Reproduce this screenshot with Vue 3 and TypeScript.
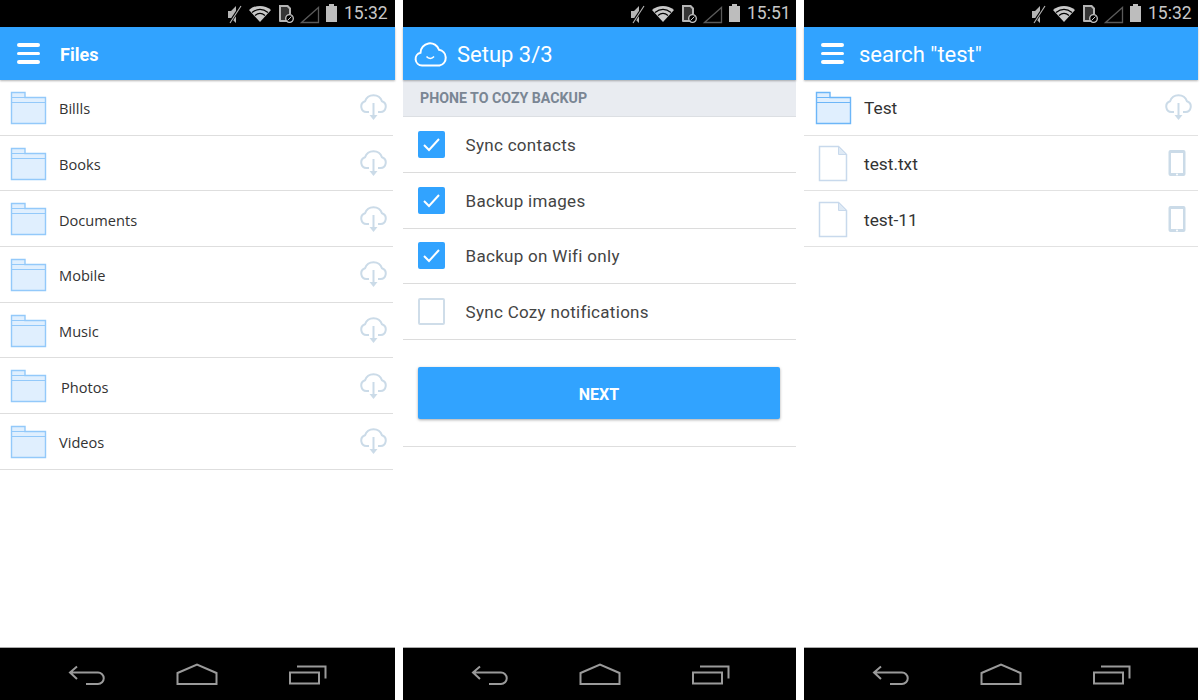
<script setup lang="ts">
interface Row {
  name: string
  kind: 'folder' | 'file'
  shift?: boolean
}

const folders: Row[] = [
  { name: 'Billls', kind: 'folder' },
  { name: 'Books', kind: 'folder' },
  { name: 'Documents', kind: 'folder' },
  { name: 'Mobile', kind: 'folder' },
  { name: 'Music', kind: 'folder' },
  { name: 'Photos', kind: 'folder', shift: true },
  { name: 'Videos', kind: 'folder' },
]

const results: Row[] = [
  { name: 'Test', kind: 'folder' },
  { name: 'test.txt', kind: 'file' },
  { name: 'test-11', kind: 'file' },
]

const options = [
  { label: 'Sync contacts', checked: true },
  { label: 'Backup images', checked: true },
  { label: 'Backup on Wifi only', checked: true },
  { label: 'Sync Cozy notifications', checked: false },
]

const phones = [
  { id: 'files', time: '15:32' },
  { id: 'setup', time: '15:51' },
  { id: 'search', time: '15:32' },
]
</script>

<template>
  <div class="screens">
    <section v-for="phone in phones" :key="phone.id" class="phone" :class="`phone--${phone.id}`">
      <div class="status">
        <svg class="status__icons" width="112" height="27" viewBox="0 0 112 27">
          <!-- muted speaker -->
          <path d="M2 11h3l5-5v17l-5-5H2z" fill="#b5b5b5" />
          <path d="M15 6 3 24" stroke="#000" stroke-width="3" />
          <path d="M15 6 4 23" stroke="#b5b5b5" stroke-width="1.100" />
          <!-- wifi -->
          <path d="M23 10C29 4.500 39 4.500 45 10L34 22z" fill="#c8c8c8" />
          <path d="M26 12.500C31 8.500 37 8.500 42 12.500M29 15.500C32 13 36 13 39 15.500" stroke="#000" stroke-width="1.200" fill="none" />
          <!-- sim -->
          <path d="M53 5h9l3 3v6h-2v8h-9a1 1 0 0 1-1-1z" fill="#b5b5b5" />
          <path d="M55 7h6l2 2v11h-8z" fill="#000" opacity=".7" />
          <circle cx="63.500" cy="18.500" r="3.800" fill="#000" stroke="#c8c8c8" stroke-width="1.300" />
          <path d="M61.500 20.500 65.500 16.500" stroke="#c8c8c8" stroke-width="1" />
          <!-- signal -->
          <path d="M75.500 22.500 92.500 7.500v15z" fill="none" stroke="#5a5a5a" stroke-width="1.300" />
          <!-- battery -->
          <path d="M100 6h3V4h5v2h3v16h-11z" fill="#bdbdbd" />
        </svg>
        <span class="status__time">{{ phone.time }}</span>
      </div>

      <!-- files list -->
      <template v-if="phone.id === 'files'">
        <header class="bar">
          <span class="burger"><i></i><i></i><i></i></span>
          <h1 class="bar__title bar__title--bold">Files</h1>
        </header>
        <ul class="list list--files">
          <li v-for="row in folders" :key="row.name" class="row">
            <svg class="row__icon" width="37" height="34" viewBox="0 0 37 34">
              <path d="M1.500 1.500h13.500v5h20.500v26h-34z" fill="#e0effe" stroke="#93c9fa" stroke-width="1.400" />
              <path d="M1.500 6.500H15M1.500 11.500h34" stroke="#93c9fa" stroke-width="1.200" fill="none" />
            </svg>
            <span class="row__name" :class="{ 'row__name--shift': row.shift }">{{ row.name }}</span>
            <svg class="row__side row__side--cloud" width="28" height="28" viewBox="0 0 28 28">
              <path d="M9 18H6.500A5.500 5.500 0 0 1 5 7.300 9 9 0 0 1 22 7.300 5.500 5.500 0 0 1 20.500 18H18" fill="none" stroke="#cbdbe8" stroke-width="2" />
              <path d="M13.500 9v14" stroke="#cbdbe8" stroke-width="2" />
              <path d="M9.500 21h8l-4 5z" fill="#cbdbe8" />
            </svg>
          </li>
        </ul>
      </template>

      <!-- setup step -->
      <template v-else-if="phone.id === 'setup'">
        <header class="bar bar--setup">
          <svg width="34" height="26" viewBox="0 0 34 26">
            <path d="M8 24.500a6.500 6.500 0 0 1-1.500-12.800A9.500 9.500 0 0 1 25 8.800a8 8 0 0 1 .5 15.700z" fill="none" stroke="#fff" stroke-width="2" />
            <path d="M12.500 15.500c2 2.500 5.500 2.500 7.500 0" fill="none" stroke="#fff" stroke-width="1.500" />
          </svg>
          <h1 class="bar__title bar__title--setup">Setup 3/3</h1>
        </header>
        <div class="section">PHONE TO COZY BACKUP</div>
        <ul class="list">
          <li v-for="opt in options" :key="opt.label" class="option">
            <span class="check" :class="{ 'check--on': opt.checked }">
              <svg v-if="opt.checked" width="27" height="27" viewBox="0 0 27 27">
                <path d="M6 14 11 19 21 8" fill="none" stroke="#fff" stroke-width="2" />
              </svg>
            </span>
            <span class="option__label">{{ opt.label }}</span>
          </li>
        </ul>
        <div class="actions">
          <button class="next" type="button">NEXT</button>
        </div>
      </template>

      <!-- search results -->
      <template v-else>
        <header class="bar">
          <span class="burger"><i></i><i></i><i></i></span>
          <h1 class="bar__title bar__title--search">search "test"</h1>
        </header>
        <ul class="list">
          <li v-for="row in results" :key="row.name" class="row row--result">
            <svg v-if="row.kind === 'folder'" class="row__icon" width="37" height="34" viewBox="0 0 37 34">
              <path d="M1.500 1.500h13.500v5h20.500v26h-34z" fill="#e0effe" stroke="#6cb6f8" stroke-width="1.400" />
              <path d="M1.500 6.500H15M1.500 11.500h34" stroke="#6cb6f8" stroke-width="1.200" fill="none" />
            </svg>
            <svg v-else class="row__icon row__icon--file" width="30" height="37" viewBox="0 0 30 37">
              <path d="M1.500 1.500h19l8 8v26h-27z" fill="#fff" stroke="#c8d9ec" stroke-width="1.500" />
              <path d="M20.500 1.500v8h8z" fill="#dfeaf5" stroke="#c8d9ec" />
            </svg>
            <span class="row__name row__name--result">{{ row.name }}</span>
            <svg v-if="row.kind === 'folder'" class="row__side row__side--cloud" width="28" height="28" viewBox="0 0 28 28">
              <path d="M9 18H6.500A5.500 5.500 0 0 1 5 7.300 9 9 0 0 1 22 7.300 5.500 5.500 0 0 1 20.500 18H18" fill="none" stroke="#cbdbe8" stroke-width="2" />
              <path d="M13.500 9v14" stroke="#cbdbe8" stroke-width="2" />
              <path d="M9.500 21h8l-4 5z" fill="#cbdbe8" />
            </svg>
            <svg v-else class="row__side" width="28" height="28" viewBox="0 0 28 28">
              <rect x="3.500" y="1" width="17" height="26" rx="2" fill="#cbdbe8" />
              <rect x="6" y="4" width="12" height="20" fill="#fff" />
              <circle cx="12" cy="25.500" r="1" fill="#fff" />
            </svg>
          </li>
        </ul>
      </template>

      <nav class="nav">
        <svg width="340" height="52" viewBox="0 0 340 52">
          <path d="M77 18.500 70 24.500l7 6.500M70 24.500h28a5.750 5.750 0 0 1 0 11.500H86" fill="none" stroke="#9a9a9a" stroke-width="2" />
          <path d="M177.500 36V25L197 16.500 216.500 25v11z" fill="none" stroke="#9a9a9a" stroke-width="2" />
          <path d="M290 24.500h29v11h-29z" fill="none" stroke="#9a9a9a" stroke-width="2" />
          <path d="M297 18.500h28.500v12" fill="none" stroke="#9a9a9a" stroke-width="2" />
        </svg>
      </nav>
    </section>
  </div>
</template>

<style>
html,
body {
  margin: 0;
  background: #fff;
}
</style>

<style scoped>
.screens {
  display: flex;
  gap: 8px;
  width: 1200px;
  height: 700px;
  overflow: hidden;
  font-family: Roboto, "Liberation Sans", sans-serif;
}

.phone {
  display: flex;
  flex-direction: column;
  width: 394px;
  height: 700px;
}

.phone--files {
  width: 395px;
}

.phone--setup {
  width: 393px;
}

.status {
  display: flex;
  align-items: center;
  gap: 6px;
  height: 27px;
  padding-left: 226px;
  background: #000;
  flex-shrink: 0;
}

.status__time {
  color: #c8c8c8;
  font-size: 17.500px;
  line-height: 27px;
}

.bar {
  display: flex;
  align-items: center;
  height: 53px;
  padding-left: 17px;
  background: #31a3ff;
  box-shadow: 0 1px 2px rgba(0, 0, 0, 0.3);
  flex-shrink: 0;
  position: relative;
}

.bar--setup {
  padding-left: 11px;
}

.burger {
  display: flex;
  flex-direction: column;
  gap: 5px;
  width: 23px;
}

.burger i {
  display: block;
  height: 3.400px;
  border-radius: 2px;
  background: #fff;
}

.bar__title {
  margin: 0;
  padding-top: 1px;
  color: #fff;
  font-size: 22px;
  font-weight: 400;
}

.bar__title--bold {
  margin-left: 20px;
  font-size: 18px;
  font-weight: 700;
}

.bar__title--setup {
  margin-left: 9px;
}

.bar__title--search {
  margin-left: 15px;
}

.list {
  margin: 0;
  padding: 0;
  list-style: none;
}

.list--files {
  width: 393px;
}

.row {
  display: flex;
  align-items: center;
  box-sizing: border-box;
  height: 55.700px;
  padding: 0 5px 0 11px;
  border-bottom: 1px solid #dedede;
}

.list--files .row {
  padding-left: 10px;
}

.row--result {
  border-bottom-color: #e2e2e2;
}

.row__icon {
  flex-shrink: 0;
  margin-top: 1px;
}

.row__icon--file {
  margin: 1px 4px 0 3px;
}

.row__name {
  margin-left: 12px;
  padding-top: 2px;
  flex: 1;
  color: #333;
  font-family: "Open Sans", "Liberation Sans", sans-serif;
  font-size: 14.600px;
}

.row__name--shift {
  margin-left: 14px;
}

.row__name--result {
  font-family: Roboto, "Liberation Sans", sans-serif;
  font-size: 17.300px;
}

.row__side {
  flex-shrink: 0;
}

.row__side--cloud {
  margin-top: 2px;
}

.section {
  height: 36px;
  padding-left: 17px;
  background: #e9ecf1;
  border-bottom: 1px solid #dcdfe3;
  color: #7a8694;
  font-size: 14.200px;
  font-weight: 700;
  line-height: 36px;
}

.option {
  display: flex;
  align-items: center;
  box-sizing: border-box;
  height: 55.800px;
  padding-left: 15px;
  border-bottom: 1px solid #dcdcdc;
}

.check {
  display: block;
  box-sizing: border-box;
  width: 27px;
  height: 27px;
  border: 2px solid #cfdde9;
  border-radius: 2px;
  background: #fff;
}

.check--on {
  border: none;
  background: #31a3ff;
}

.check svg {
  display: block;
}

.option__label {
  margin-left: 20.500px;
  padding-top: 1px;
  color: #444;
  font-size: 17px;
  letter-spacing: 0.300px;
}

.actions {
  box-sizing: border-box;
  height: 107px;
  padding: 27px 16px 0 15px;
  border-bottom: 1px solid #dedede;
}

.next {
  display: block;
  width: 100%;
  height: 52px;
  padding: 2px 0 0;
  border: none;
  border-radius: 2px;
  background: #31a3ff;
  box-shadow: 0 1px 3px rgba(0, 0, 0, 0.35);
  color: #fff;
  font-family: Roboto, "Liberation Sans", sans-serif;
  font-size: 16px;
  font-weight: 700;
}

.nav {
  display: flex;
  align-items: center;
  margin-top: auto;
  box-sizing: border-box;
  height: 53px;
  background: #000;
  border-top: 1px solid #aaa;
  flex-shrink: 0;
}

.nav svg {
  display: block;
}
</style>
